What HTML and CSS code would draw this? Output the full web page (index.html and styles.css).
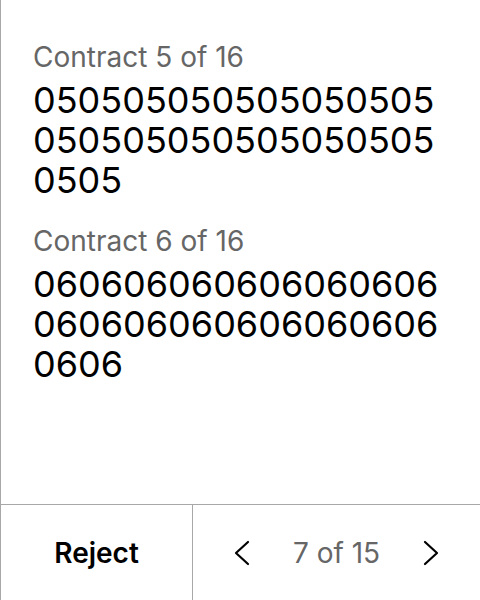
FILE: index.html
```html
<!DOCTYPE html>
<html>
<head>
<meta charset="utf-8">
<link rel="stylesheet" href="styles.css">
</head>
<body>
<div class="screen">
  <main class="content">
    <section class="contract">
      <div class="label">Contract 5 of 16</div>
      <div class="value">0505050505050505050505050505050505050505</div>
    </section>
    <section class="contract">
      <div class="label">Contract 6 of 16</div>
      <div class="value">0606060606060606060606060606060606060606</div>
    </section>
  </main>
  <footer class="footer">
    <button class="reject">Reject</button>
    <div class="pager">
      <button class="nav" aria-label="Previous">
        <svg width="24" height="36" viewBox="0 0 24 36"><path d="M17 7 L5 18 L17 29" fill="none" stroke="#000" stroke-width="2.2" stroke-linecap="round" stroke-linejoin="round"/></svg>
      </button>
      <span class="count">7 of 15</span>
      <button class="nav" aria-label="Next">
        <svg width="24" height="36" viewBox="0 0 24 36"><path d="M7 7 L19 18 L7 29" fill="none" stroke="#000" stroke-width="2.2" stroke-linecap="round" stroke-linejoin="round"/></svg>
      </button>
    </div>
  </footer>
</div>
</body>
</html>
```
FILE: styles.css
```css
* { box-sizing: border-box; }
html, body { margin: 0; padding: 0; background: #fff; }
body { font-family: Inter, "Noto Sans", sans-serif; color: #000; }
.screen {
  width: 480px;
  height: 600px;
  display: flex;
  flex-direction: column;
  border-left: 1px solid #a8a8a8;
}
.content {
  flex: 1;
  padding: 40px 32px 0 32px;
  display: flex;
  flex-direction: column;
  gap: 24px;
}
.label {
  font-size: 28px;
  line-height: 34px;
  color: #666;
}
.value {
  font-size: 36px;
  line-height: 40px;
  word-break: break-all;
  margin-top: 6px;
}
.footer {
  height: 96px;
  border-top: 1px solid #a8a8a8;
  display: flex;
}
.reject {
  width: 192px;
  border: 0;
  border-right: 1px solid #a8a8a8;
  background: none;
  font: 600 28px Inter, sans-serif;
  color: #000;
  padding: 0;
}
.pager {
  flex: 1;
  display: flex;
  align-items: center;
  justify-content: space-between;
  padding: 0 38px;
}
.nav { border: 0; background: none; padding: 0; display: flex; }
.count { font-size: 28px; color: #666; }
```
